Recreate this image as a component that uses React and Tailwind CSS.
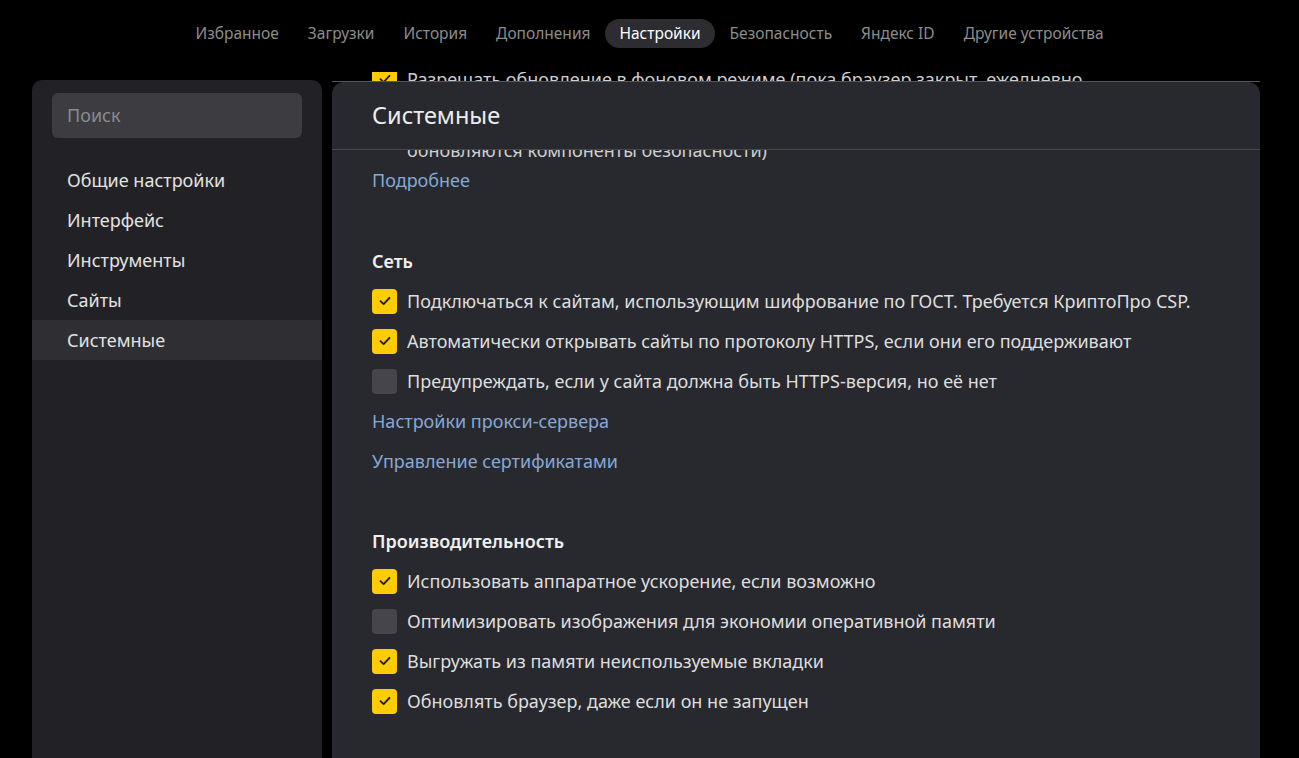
import React from "react";

const navItems = ["Избранное", "Загрузки", "История", "Дополнения", "Настройки", "Безопасность", "Яндекс ID", "Другие устройства"];
const menu = ["Общие настройки", "Интерфейс", "Инструменты", "Сайты", "Системные"];

function Check({ on }) {
  return (
    <div className={"w-[25px] h-[25px] rounded-[4px] flex items-center justify-center shrink-0 " + (on ? "bg-[#ffcc00]" : "bg-[#45454b]")}>
      {on && (
        <svg width="14" height="14" viewBox="0 0 14 14" fill="none">
          <path d="M2.5 7.2 L5.6 10.2 L11.5 3.8" stroke="#1a1a1a" strokeWidth="1.8" strokeLinecap="round" strokeLinejoin="round" />
        </svg>
      )}
    </div>
  );
}

function Row({ on, children }) {
  return (
    <div className="h-[40px] flex items-center gap-[10px]">
      <Check on={on} />
      <span className="text-[#dedede] whitespace-nowrap">{children}</span>
    </div>
  );
}

function LinkRow({ children }) {
  return <div className="h-[40px] flex items-center text-[#86a8d4]">{children}</div>;
}

export default function App() {
  return (
    <div className="h-[758px] overflow-hidden bg-black text-[18px]" style={{ fontFamily: '"Noto Sans", "Open Sans", sans-serif' }}>
      <nav className="h-[67px] flex items-center justify-center text-[15.5px]">
        {navItems.map((n) => (
          <div
            key={n}
            className={
              "h-[29px] px-[14.5px] flex items-center rounded-full " +
              (n === "Настройки" ? "bg-[#2c2c31] text-white" : "text-[#8c8c8c]")
            }
          >
            {n}
          </div>
        ))}
      </nav>
      <div className="flex gap-[10px] px-[32px]">
        <aside className="w-[290px] h-[678px] mt-[13px] bg-[#222226] rounded-t-[10px] pt-[13px]">
          <div className="mx-[20px] h-[45px] rounded-[6px] bg-[#3c3c41] flex items-center px-[15px] text-[#8b8b90]">Поиск</div>
          <div className="mt-[22px]">
            {menu.map((m) => (
              <div
                key={m}
                className={"h-[40px] flex items-center px-[35px] text-[#e2e2e2] " + (m === "Системные" ? "bg-[#2e2e33]" : "")}
              >
                {m}
              </div>
            ))}
          </div>
        </aside>
        <main className="w-[928px] flex flex-col">
          <div className="h-[9px] mt-[5px] overflow-hidden shrink-0">
            <div className="h-[40px] -mt-[13px] px-[40px] flex items-center gap-[10px] text-[#cfcfcf]">
              <Check on={true} />
              <span className="whitespace-nowrap">Разрешать обновление в фоновом режиме (пока браузер закрыт, ежедневно</span>
            </div>
          </div>
          <div className="h-px bg-[#56565b] shrink-0" />
          <div className="h-[676px] bg-[#28292e] rounded-t-[12px] flex flex-col">
            <div className="h-[68px] border-b border-[#47474c] flex items-center px-[40px] text-[23.5px] text-[#ececec] shrink-0">Системные</div>
            <div className="px-[40px]">
              <div className="h-[10px] overflow-hidden">
                <div className="h-[40px] -mt-[20px] flex items-center pl-[35px] text-[#cfcfcf] whitespace-nowrap">
                  обновляются компоненты безопасности)
                </div>
              </div>
              <LinkRow>Подробнее</LinkRow>
              <div className="h-[40px] mt-[41px] flex items-center font-semibold text-[#f0f0f0]">Сеть</div>
              <Row on>Подключаться к сайтам, использующим шифрование по ГОСТ. Требуется КриптоПро CSP.</Row>
              <Row on>Автоматически открывать сайты по протоколу HTTPS, если они его поддерживают</Row>
              <Row>Предупреждать, если у сайта должна быть HTTPS-версия, но её нет</Row>
              <LinkRow>Настройки прокси-сервера</LinkRow>
              <LinkRow>Управление сертификатами</LinkRow>
              <div className="h-[40px] mt-[40px] flex items-center font-semibold text-[#f0f0f0]">Производительность</div>
              <Row on>Использовать аппаратное ускорение, если возможно</Row>
              <Row>Оптимизировать изображения для экономии оперативной памяти</Row>
              <Row on>Выгружать из памяти неиспользуемые вкладки</Row>
              <Row on>Обновлять браузер, даже если он не запущен</Row>
            </div>
          </div>
        </main>
      </div>
    </div>
  );
}
